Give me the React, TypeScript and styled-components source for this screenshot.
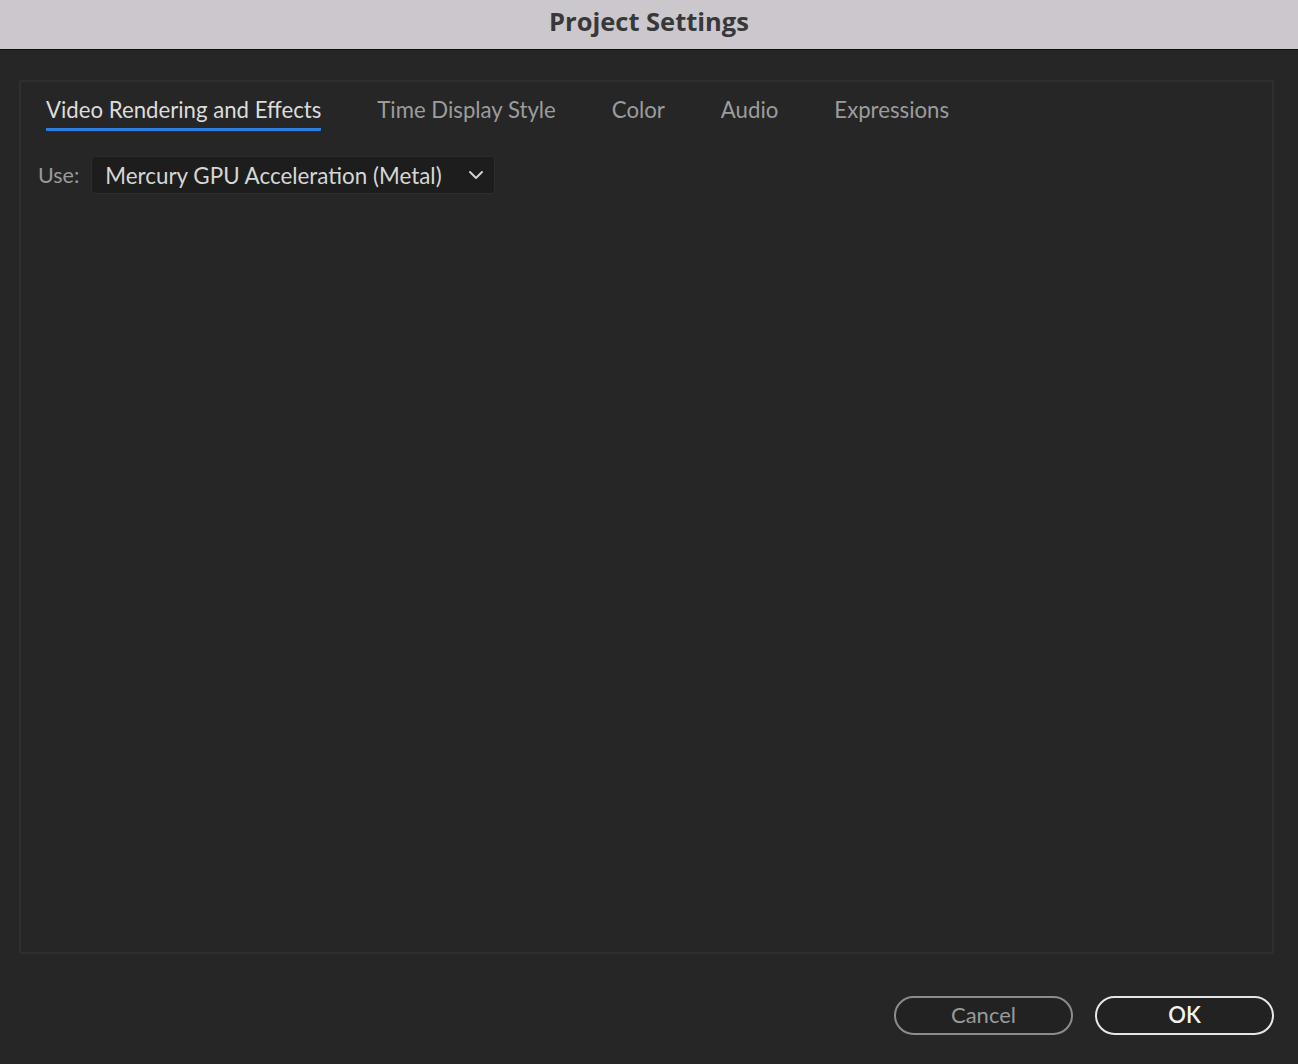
import React from "react";
import styled, { createGlobalStyle } from "styled-components";

const Global = createGlobalStyle`
  html, body { margin: 0; padding: 0; background: #262626; }
  body { font-family: Lato, "Open Sans", "Liberation Sans", sans-serif; }
  #root { width: 1298px; height: 1064px; }
`;

const Window = styled.div`
  width: 1298px;
  height: 1064px;
  display: flex;
  flex-direction: column;
  background: #262626;
  overflow: hidden;
`;

const TitleBar = styled.div`
  height: 50px;
  box-sizing: border-box;
  background: #cbc7cc;
  border-bottom: 1px solid #0e0e0e;
  display: flex;
  align-items: center;
  justify-content: center;
  font-family: "Open Sans", "Liberation Sans", sans-serif;
  font-weight: 700;
  font-size: 25.5px;
  color: #38383a;
  padding-bottom: 7px;
`;

const Body = styled.div`
  flex: 1;
  display: flex;
  flex-direction: column;
  padding: 30px 24px 0 19px;
`;

const Panel = styled.div`
  height: 874px;
  box-sizing: border-box;
  border: 2px solid #2f2f2f;
  border-radius: 2px;
  display: flex;
  flex-direction: column;
`;

const TabRow = styled.div`
  display: flex;
  gap: 56px;
  padding-left: 25px;
`;

const Tab = styled.div<{ $active?: boolean }>`
  padding-top: 14px;
  padding-bottom: 4px;
  line-height: 28px;
  font-size: 22.2px;
  color: ${(p) => (p.$active ? "#dcdcdc" : "#9c9c9c")};
  border-bottom: 3px solid ${(p) => (p.$active ? "#2d7fe0" : "transparent")};
  border-radius: 1px;
  white-space: nowrap;
`;

const UseRow = styled.div`
  display: flex;
  align-items: center;
  gap: 12px;
  padding-left: 17px;
  margin-top: 25px;
`;

const Label = styled.span`
  font-size: 21.5px;
  color: #9a9a9a;
`;

const Select = styled.div`
  width: 404px;
  height: 38px;
  box-sizing: border-box;
  background: #1d1d1d;
  border: 1px solid #2c2c2c;
  border-radius: 4px;
  display: flex;
  align-items: center;
  justify-content: space-between;
  padding: 0 10px 0 13px;
  font-size: 22.4px;
  color: #d6d6d6;
  white-space: nowrap;
`;

const Footer = styled.div`
  display: flex;
  justify-content: flex-end;
  gap: 22px;
  padding-top: 42px;
`;

const Button = styled.button<{ $primary?: boolean }>`
  width: 179px;
  height: 39px;
  box-sizing: border-box;
  border-radius: 20px;
  background: #222222;
  border: 2px solid ${(p) => (p.$primary ? "#e6e6e6" : "#8c8c8c")};
  color: ${(p) => (p.$primary ? "#f2f2f2" : "#9a9a9a")};
  font-family: Lato, "Open Sans", sans-serif;
  font-size: 22px;
  font-weight: ${(p) => (p.$primary ? 600 : 400)};
  padding: 0 0 2px;
  cursor: pointer;
`;

const Chevron = () => (
  <svg width="16" height="10" viewBox="0 0 16 10" fill="none">
    <path d="M2 2 L8 8 L14 2" stroke="#d0d0d0" strokeWidth="2" strokeLinecap="round" strokeLinejoin="round" />
  </svg>
);

const tabs = ["Video Rendering and Effects", "Time Display Style", "Color", "Audio", "Expressions"];

export default function App() {
  return (
    <Window>
      <Global />
      <TitleBar>Project Settings</TitleBar>
      <Body>
        <Panel>
          <TabRow>
            {tabs.map((t, i) => (
              <Tab key={t} $active={i === 0}>
                {t}
              </Tab>
            ))}
          </TabRow>
          <UseRow>
            <Label>Use:</Label>
            <Select>
              <span>Mercury GPU Acceleration (Metal)</span>
              <Chevron />
            </Select>
          </UseRow>
        </Panel>
        <Footer>
          <Button>Cancel</Button>
          <Button $primary>OK</Button>
        </Footer>
      </Body>
    </Window>
  );
}
